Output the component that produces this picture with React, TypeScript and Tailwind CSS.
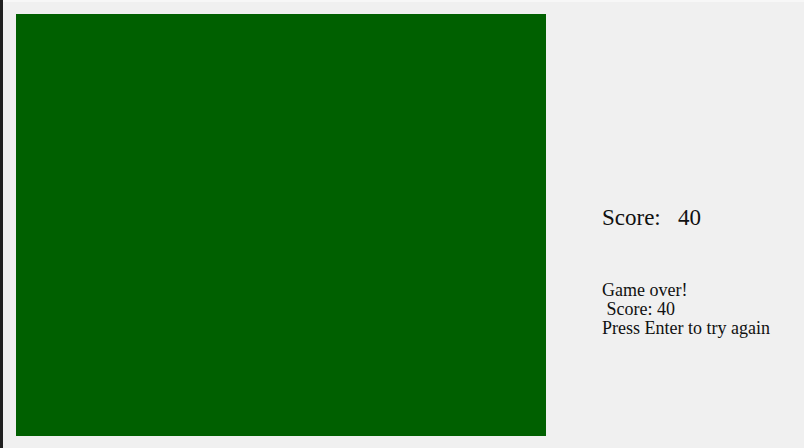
import React from "react";

export default function App() {
  return (
    <div className="flex h-[448px] w-[804px] bg-[#202020]" style={{ fontFamily: '"Liberation Serif", serif' }}>
      <div className="ml-[3px] flex flex-1 border-t-2 border-[#f7f7f7] bg-[#f0f0f0]">
        <div className="ml-[13px] mt-[12px] h-[422px] w-[530px] bg-[#006000]" />
        <div className="ml-[56px] flex flex-col pt-[198px] text-[#111]">
          <div className="text-[23px] leading-[36px]">Score:&nbsp;&nbsp; 40</div>
          <div className="mt-[45px] text-[18px] leading-[19px]">
            <div>Game over!</div>
            <div>&nbsp;Score: 40</div>
            <div>Press Enter to try again</div>
          </div>
        </div>
      </div>
    </div>
  );
}
